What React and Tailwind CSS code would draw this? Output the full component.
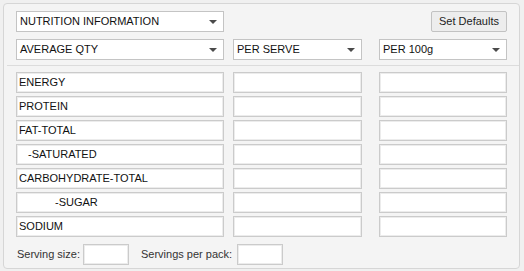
import { useState } from "react";

const nutrients = [
  { label: "ENERGY", indent: "pl-[2px]" },
  { label: "PROTEIN", indent: "pl-[2px]" },
  { label: "FAT-TOTAL", indent: "pl-[2px]" },
  { label: "-SATURATED", indent: "pl-[11px]" },
  { label: "CARBOHYDRATE-TOTAL", indent: "pl-[2px]" },
  { label: "-SUGAR", indent: "pl-[38px]" },
  { label: "SODIUM", indent: "pl-[2px]" },
];

function Select({ value, className }) {
  return (
    <div
      className={
        "flex h-[21px] items-center justify-between border border-[#c4c4c4] bg-white pl-[3px] pr-[6px] text-[11px] text-[#111] " +
        className
      }
    >
      <span>{value}</span>
      <span className="h-0 w-0 border-x-[4px] border-t-[4px] border-x-transparent border-t-[#4a4a4a]" />
    </div>
  );
}

function Box({ className, children }) {
  return (
    <div
      className={
        "flex h-[21px] items-center border border-[#cbcbcb] bg-white text-[11px] text-[#111] shadow-[inset_0_0_0_1px_#ececec] " +
        className
      }
    >
      {children}
    </div>
  );
}

export default function App() {
  const [values] = useState(nutrients.map(() => ["", ""]));

  return (
    <div
      className="h-[271px] w-[524px] bg-[#f0f0f0] p-[3px]"
      style={{ fontFamily: "'Liberation Sans', Arial, sans-serif" }}
    >
      <div className="h-[266px] w-[517px] rounded-[4px] border border-[#d6d6d6] bg-[#f4f4f4] pl-[12px] pr-[12px] pt-[7px]">
        {/* top row */}
        <div className="flex items-center justify-between">
          <Select value="NUTRITION INFORMATION" className="w-[208px]" />
          <button className="h-[21px] w-[76px] rounded-[2px] border border-[#c2c2c2] bg-[#ededed] text-[11px] text-[#222]">
            Set Defaults
          </button>
        </div>

        {/* column headers */}
        <div className="mt-[7px] flex">
          <Select value="AVERAGE QTY" className="w-[208px]" />
          <Select value="PER SERVE" className="ml-[9px] w-[129px]" />
          <Select value="PER 100g" className="ml-[17px] w-[128px]" />
        </div>

        <div className="-ml-[9px] -mr-[12px] mt-[5px] h-[2px] border-t border-[#dcdcdc] border-b-white" />

        {/* nutrient rows */}
        <div className="mt-[5px] flex flex-col gap-[3px]">
          {nutrients.map((n, i) => (
            <div key={n.label} className="flex">
              <Box className={"w-[208px] " + n.indent}>{n.label}</Box>
              <Box className="ml-[9px] w-[129px]">{values[i][0]}</Box>
              <Box className="ml-[17px] w-[128px]">{values[i][1]}</Box>
            </div>
          ))}
        </div>

        {/* serving row */}
        <div className="mt-[7px] flex items-center text-[11px] text-[#333]">
          <span className="ml-[1px]">Serving size:</span>
          <Box className="ml-[3px] w-[46px]" />
          <span className="ml-[12px]">Servings per pack:</span>
          <Box className="ml-[5px] w-[46px]" />
        </div>
      </div>
    </div>
  );
}
